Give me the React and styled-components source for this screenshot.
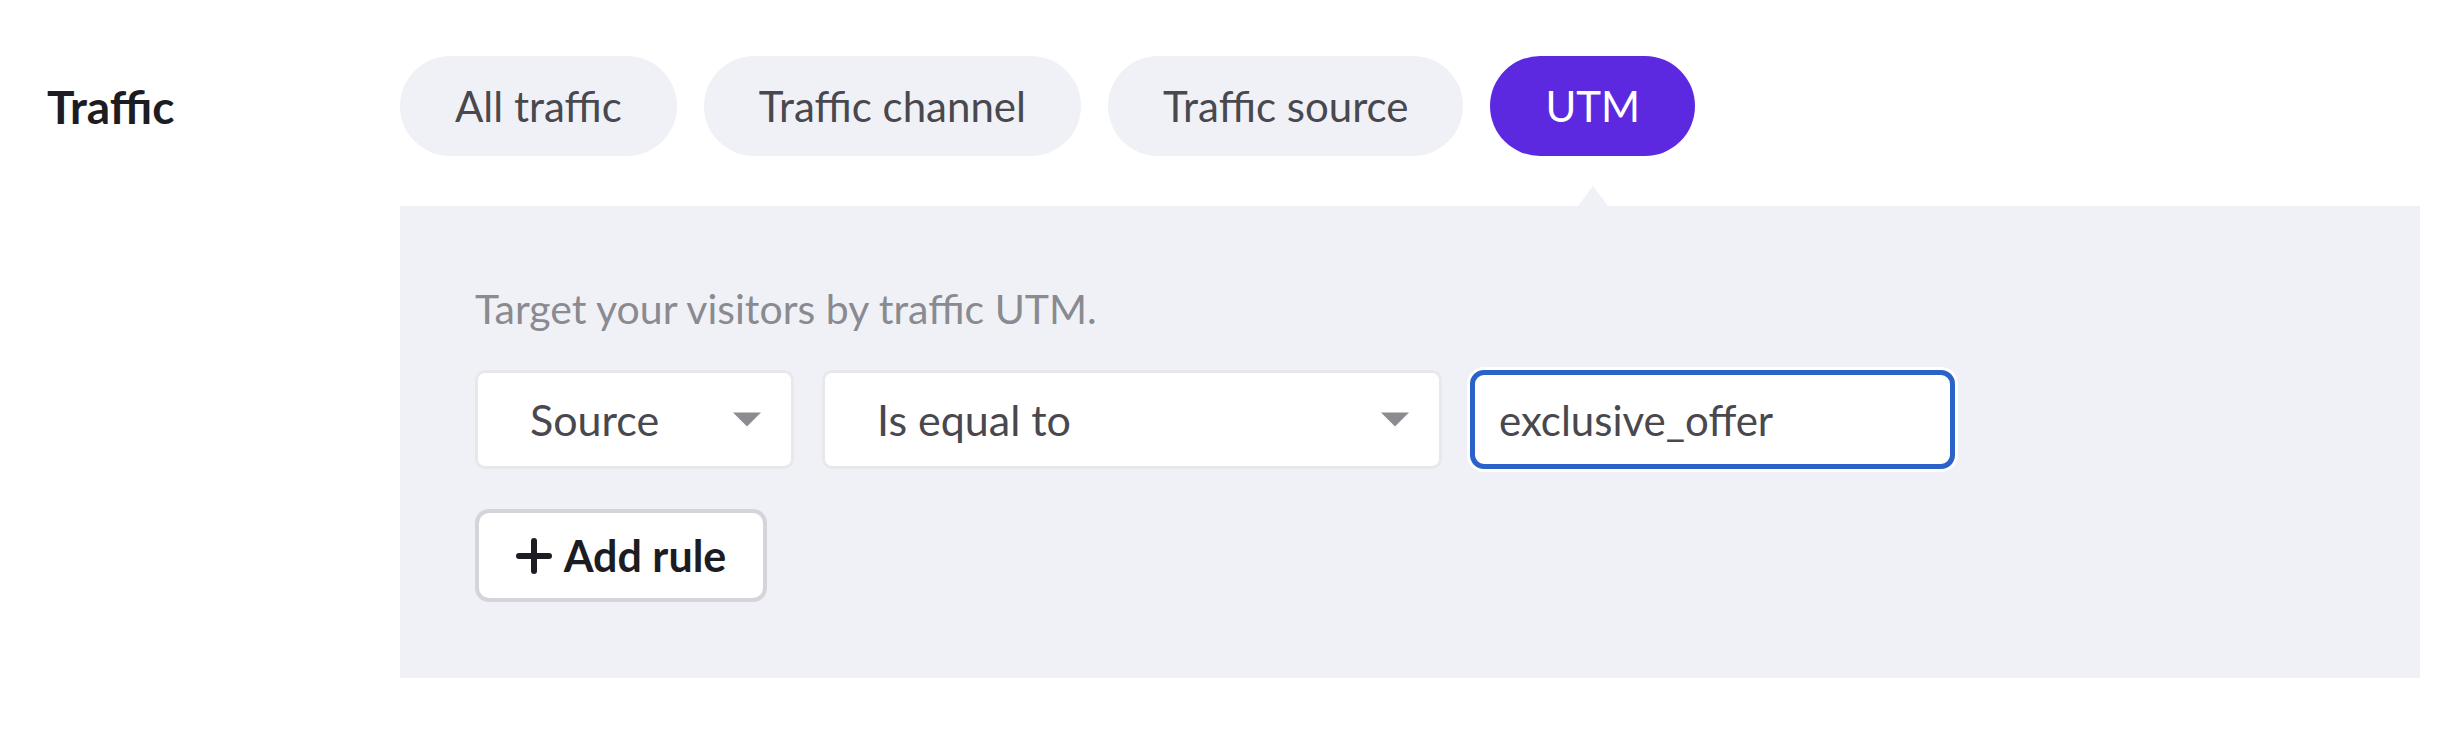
import { useState } from "react";
import styled, { createGlobalStyle } from "styled-components";

const GlobalStyle = createGlobalStyle`
  html, body {
    margin: 0;
    padding: 0;
    background: #ffffff;
    font-family: "Lato", "Noto Sans", sans-serif;
  }
`;

const tabs = ["All traffic", "Traffic channel", "Traffic source", "UTM"];

function Caret() {
  return (
    <svg width="20" height="10" viewBox="0 0 20 10">
      <path d="M0 0 L20 0 L10 10 Z" fill="#8c8c90" />
    </svg>
  );
}

function PlusIcon() {
  return (
    <svg width="36" height="36" viewBox="0 0 36 36">
      <path
        d="M18 3 V33 M3 18 H33"
        stroke="#1c1c22"
        strokeWidth="6"
        strokeLinecap="round"
      />
    </svg>
  );
}

export default function App() {
  const [active, setActive] = useState("UTM");
  const [value, setValue] = useState("exclusive_offer");

  return (
    <>
      <GlobalStyle />
      <Page>
        <Label>Traffic</Label>
        <Content>
          <Tabs>
            {tabs.map((t) => (
              <Tab key={t} active={t === active} onClick={() => setActive(t)}>
                {t}
              </Tab>
            ))}
          </Tabs>
          <Panel>
            <Description>Target your visitors by traffic UTM.</Description>
            <RuleRow>
              <Select width="319px">
                <span>Source</span>
                <Caret />
              </Select>
              <Select width="620px">
                <span>Is equal to</span>
                <Caret />
              </Select>
              <Input value={value} onChange={(e) => setValue(e.target.value)} />
            </RuleRow>
            <AddButton>
              <PlusIcon />
              Add rule
            </AddButton>
          </Panel>
        </Content>
      </Page>
    </>
  );
}

const Page = styled.div`
  display: flex;
  padding: 56px 30px 58px 0;
`;

const Label = styled.div`
  width: 353px;
  padding-left: 47px;
  height: 100px;
  display: flex;
  align-items: center;
  font-size: 46px;
  font-weight: 700;
  color: #1c1c22;
`;

const Content = styled.div`
  flex: 1;
  display: flex;
  flex-direction: column;
`;

const Tabs = styled.div`
  display: flex;
  gap: 27px;
  margin-bottom: 50px;
`;

const Tab = styled.button`
  position: relative;
  height: 100px;
  padding: 0 55px;
  border: none;
  border-radius: 50px;
  font-family: inherit;
  font-size: 42px;
  font-weight: 400;
  cursor: pointer;
  background: ${(p) => (p.active ? "#5c29e1" : "#f0f1f6")};
  color: ${(p) => (p.active ? "#ffffff" : "#48484e")};

  &::after {
    content: "";
    display: ${(p) => (p.active ? "block" : "none")};
    position: absolute;
    left: 50%;
    bottom: -50px;
    margin-left: -15px;
    border-style: solid;
    border-width: 0 15px 20px;
    border-color: transparent transparent #f0f1f6;
  }
`;

const Panel = styled.div`
  background: #f0f1f6;
  padding: 80px 75px 76px;
  display: flex;
  flex-direction: column;
  align-items: flex-start;
`;

const Description = styled.div`
  font-size: 41px;
  line-height: 46px;
  color: #8a8a91;
  margin-bottom: 38px;
`;

const RuleRow = styled.div`
  display: flex;
  gap: 28px;
  margin-bottom: 40px;
`;

const Select = styled.div`
  box-sizing: border-box;
  width: ${(p) => p.width};
  height: 99px;
  background: #ffffff;
  border: 3px solid #e8e8ec;
  border-radius: 10px;
  display: flex;
  align-items: center;
  justify-content: space-between;
  padding: 0 30px 0 52px;
  font-size: 43px;
  color: #48484e;

  svg {
    width: 28px;
    height: 15px;
  }
`;

const Input = styled.input`
  box-sizing: border-box;
  width: 485px;
  height: 99px;
  background: #ffffff;
  border: 5px solid #2b62c9;
  border-radius: 14px;
  box-shadow: 0 0 0 3px #ffffff;
  outline: none;
  padding: 0 24px;
  font-family: inherit;
  font-size: 42px;
  color: #48484e;
`;

const AddButton = styled.button`
  box-sizing: border-box;
  height: 93px;
  width: 292px;
  background: #ffffff;
  border: 4px solid #d4d4da;
  border-radius: 14px;
  display: flex;
  align-items: center;
  justify-content: center;
  gap: 12px;
  font-family: inherit;
  font-size: 43px;
  font-weight: 700;
  color: #1c1c22;
  cursor: pointer;
`;
